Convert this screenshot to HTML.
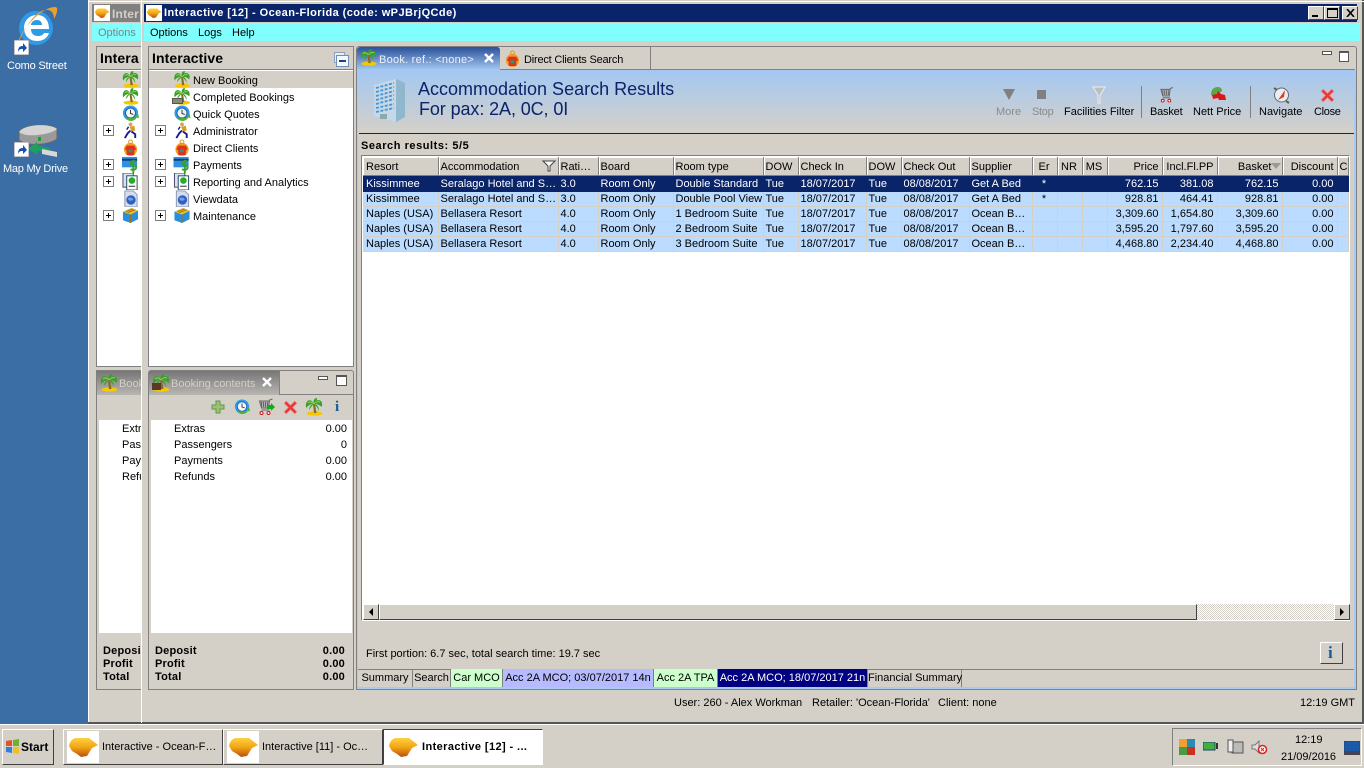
<!DOCTYPE html>
<html><head><meta charset="utf-8"><title>Interactive</title>
<style>
html,body{margin:0;padding:0;width:1364px;height:768px;overflow:hidden;background:#d4d0c8}
body{position:relative;font:11px "Liberation Sans",sans-serif;color:#000;letter-spacing:0}
.a,.t,svg.i{position:absolute}
.t{white-space:nowrap;line-height:14px;margin-top:1px}
.t.z{margin-top:0}
.b{font-weight:bold;letter-spacing:.2px}
.r{text-align:right}
.pb{position:absolute;width:9px;height:9px;border:1px solid #808080;background:#fff}
.pb:before{content:"";position:absolute;left:2px;top:4px;width:5px;height:1px;background:#000}
.pb:after{content:"";position:absolute;left:4px;top:2px;width:1px;height:5px;background:#000}
.btn{position:absolute;background:#d4d0c8;border:1px solid;border-color:#fff #404040 #404040 #fff;box-sizing:border-box}
table{position:absolute;left:363px;top:157px;border-collapse:collapse;table-layout:fixed;width:985px}
td,th{overflow:hidden;white-space:nowrap;padding:0 3px 0 2px;font-weight:normal;text-align:left;box-sizing:border-box}
td:first-child,th:first-child{padding-left:3px}
th{height:18px;line-height:13px;background:#d4d0c8;border-right:1px solid #808080;border-bottom:1px solid #808080;box-shadow:inset 1px 1px 0 #fff;padding-top:4px}
td{height:15px;background:#bbdcff;border-right:1px solid #d4d0c8;border-bottom:1px solid #d4d0c8;line-height:13px;padding-top:1px}
tr.s td{height:16px;line-height:14px;background:#0a246a;color:#fff;border-color:#0a246a}
.n{text-align:right}
.bt{position:absolute;top:669px;height:18px;line-height:19px;text-align:center;border-right:1px solid #808080;box-sizing:border-box;white-space:nowrap}
.tk{position:absolute;top:729px;height:36px;box-sizing:border-box;border:1px solid;border-color:#fff #404040 #404040 #fff;background:#d4d0c8;line-height:35px;white-space:nowrap}
.lg{position:absolute;left:3px;top:1px;width:32px;height:32px;background:#fff}
</style></head><body>
<svg width="0" height="0" style="position:absolute">
<defs>
<linearGradient id="lgo" x1="0" y1="0" x2="0" y2="1"><stop offset="0" stop-color="#ffd040"/><stop offset=".5" stop-color="#f2a414"/><stop offset="1" stop-color="#b84c10"/></linearGradient>
<symbol id="palm" viewBox="0 0 18 18"><ellipse cx="9.500" cy="15.500" rx="8" ry="2.200" fill="#f5c800"/><path d="M8 6l1 9h2.500L10 6z" fill="#8a6a20"/><path d="M9 6C7 1 2 1 1 6c-.5 2 0 3 .5 4C3 7 6 6 9 6zM9 6c2-5 7-5 8-1 .3 2 0 3-.5 4C15 7 12 6 9 6zM9 6C7 6 4 8 4 12c2-3 3-4 5-6zM9 6c3 0 5 3 5 7-1-3-3-5-5-7zM9 6C8 3 9 0 12 0c0 3-1 4-3 6z" fill="#3aa028"/><path d="M3 5c2-2 4-1 6 1M15 4c-2-1-4 0-6 2" stroke="#8fd060" fill="none"/></symbol>
<symbol id="clock" viewBox="0 0 18 18"><circle cx="9" cy="8.500" r="8" fill="#2f9ae8"/><circle cx="9" cy="8.500" r="5.300" fill="#f4f4f4" stroke="#1a60b0"/><path d="M9 5v4l3 1" stroke="#333" fill="none"/><path d="M4 14c3 4 9 4 12-1l-2-.5 3-3.500 1 5-1-.5" fill="#4cb034"/></symbol>
<symbol id="run" viewBox="0 0 18 18"><circle cx="9" cy="2.500" r="2" fill="#d8a060"/><path d="M8 5l5-1 1 5-4 1z" fill="#d8a020"/><path d="M9 9L6 12 3 17M10 10l4 3 0 4" stroke="#1a1a90" stroke-width="2" fill="none"/><path d="M7 5L5 8" stroke="#1a1a90" stroke-width="1.500"/></symbol>
<symbol id="cli" viewBox="0 0 18 18"><circle cx="9" cy="11" r="7" fill="#f0a020"/><circle cx="9" cy="3" r="2" fill="none" stroke="#e09020"/><path d="M5 7h8l2 4-2 1v5H5v-5l-2-1z" fill="#e03020"/><rect x="7" y="11" width="4" height="3" fill="#20a070"/></symbol>
<symbol id="pay" viewBox="0 0 18 18"><rect x="0" y="1" width="16" height="11" fill="#2f8fe0"/><rect x="0" y="3" width="16" height="2" fill="#0a3a80"/><path d="M15 6c-2-1-6-1-6 2 0 3 6 1 6 4 0 3-4 3-6 2M12 4v14" stroke="#38a030" stroke-width="2" fill="none"/></symbol>
<symbol id="rep" viewBox="0 0 18 18"><rect x="1" y="0" width="11" height="15" fill="#d8e4ee" stroke="#446"/><rect x="5" y="3" width="11" height="15" fill="#fff" stroke="#246"/><circle cx="10.500" cy="8" r="3.500" fill="#20b020"/><path d="M7 14h7" stroke="#222"/></symbol>
<symbol id="vd" viewBox="0 0 18 18"><path d="M3 1h9l4 4v13H3z" fill="#d4dcee" stroke="#8a96b0"/><circle cx="9.500" cy="10.500" r="5" fill="#3060c0"/><path d="M6 9c2-2 5-1 6 1-2 2-5 2-6-1z" fill="#70a0e0"/></symbol>
<symbol id="mnt" viewBox="0 0 18 18"><path d="M1 5l9-4 7 3v9l-8 4-8-3z" fill="#2a8fd8"/><path d="M1 5l9-4 7 3-8 4z" fill="#f0c030"/><path d="M4 5l8-3M6 6l8-3M9 8v9" stroke="#a07010"/></symbol>
<symbol id="x" viewBox="0 0 14 14"><path d="M1 3L3 1l4 4 4-4 2 2-4 4 4 4-2 2-4-4-4 4-2-2 4-4z" fill="#e83838" stroke="#f09090" stroke-width=".6"/></symbol>
<symbol id="cart" viewBox="0 0 16 18"><path d="M15 1l-3 1-1 8H4L2 3h10" fill="#b0b0b0" stroke="#666"/><path d="M4 4v5M6 4v5M8 4v5M10 4v5" stroke="#666"/><path d="M4 12h8" stroke="#666"/><circle cx="4" cy="15" r="1.500" fill="#fff" stroke="#d01010"/><circle cx="11" cy="15" r="1.500" fill="#fff" stroke="#d01010"/></symbol>
<symbol id="logo" viewBox="0 0 32 32"><path d="M2 15Q3 9 8 7L22 7 31 14 25 17 20 25 14 26 10 23 5 20Z" fill="url(#lgo)"/></symbol>
<symbol id="ie" viewBox="0 0 44 44"><circle cx="21" cy="22" r="17" fill="#2f9ae8"/><path d="M9 22C9 14 15 9 22 9c7 0 12 5 12 14H16c0 5 3 7 7 7 3 0 5-1 6-3h5c-2 6-7 8-12 8-8 0-13-6-13-13zM16 19h11c0-3-2-5-5-5-3 0-6 2-6 5z" fill="#fff"/><path d="M3 38C4 26 26 1 40 1c4 0 2 7-1 12 0-6-3-10-9-9C18 6 8 26 3 38z" fill="#e8a030"/></symbol>
<symbol id="sc" viewBox="0 0 15 15"><rect width="15" height="15" fill="#fff" stroke="#889" /><path d="M4 12c0-5 2-6 5-6V3l4 5-4 4V9c-2 0-4 0-5 3z" fill="#1a50a8"/></symbol>
</defs></svg>

<!-- Desktop -->
<div class="a" style="left:0;top:0;width:88px;height:725px;background:#3a6ea5"></div>
<svg class="i" style="left:15px;top:6px" width="44" height="44"><use href="#ie"/></svg>
<svg class="i" style="left:14px;top:40px" width="15" height="15"><use href="#sc"/></svg>
<div class="t" style="left:7px;top:58px;color:#fff;letter-spacing:-.2px">Como Street</div>
<svg class="i" style="left:18px;top:122px" width="42" height="38" viewBox="0 0 42 38"><path d="M1 10C6 2 32 1 39 7v10C32 23 8 25 1 18z" fill="#9a9a9a" stroke="#666"/><path d="M1 10C6 2 32 1 39 7 32 13 8 16 1 10z" fill="#d4d4d4"/><rect x="20" y="15" width="3" height="4" fill="#20a020"/><path d="M10 27l9-7 1 4 12 2-1 5-12-2 1 4z" fill="#20a060"/><path d="M24 27l15 3v5l-15-3z" fill="#d8d8d8"/></svg>
<svg class="i" style="left:14px;top:142px" width="15" height="15"><use href="#sc"/></svg>
<div class="t" style="left:3px;top:161px;color:#fff;letter-spacing:-.25px">Map My Drive</div>

<!-- Window frame -->
<div class="a" style="left:88px;top:0;width:1276px;height:724px;background:#d4d0c8;border-left:1px solid #fff;box-sizing:border-box"></div>
<div class="a" style="left:88px;top:722px;width:1276px;height:2px;background:#555"></div>
<div class="a" style="left:1362px;top:0;width:2px;height:724px;background:#555"></div>
<div class="a" style="left:88px;top:1px;width:1276px;height:1px;background:#fff"></div>
<div class="a" style="left:141px;top:0;width:1px;height:723px;background:#fff"></div>

<!-- Back window -->
<div class="a" style="left:92px;top:4px;width:48px;height:18px;background:#808080"></div>
<div class="a" style="left:94px;top:5px;width:16px;height:16px;background:#fff"><svg width="16" height="16"><use href="#logo"/></svg></div>
<div class="t b" style="left:112px;top:6px;width:28px;overflow:hidden;color:#d4d0c8;font-size:12px">Inter</div>
<div class="a" style="left:92px;top:23px;width:49px;height:18px;background:#80ffff"></div>
<div class="t" style="left:98px;top:25px;color:#808080">Options</div>
<div class="a" style="left:96px;top:46px;width:45px;height:321px;background:#fff;border:1px solid #808080;border-right:0;box-sizing:border-box"></div>
<div class="a" style="left:97px;top:47px;width:44px;height:22px;background:#d4d0c8;border-bottom:1px solid #808080"></div>
<div class="t b z" style="left:100px;top:51px;font-size:14px;width:40px;overflow:hidden;letter-spacing:.1px">Intera</div>
<div class="a" style="left:97px;top:71px;width:44px;height:17px;background:#d4d0c8"></div>
<svg class="i" style="left:122px;top:71px" width="17" height="17"><use href="#palm"/></svg>
<svg class="i" style="left:122px;top:88px" width="17" height="17"><use href="#palm"/></svg>
<svg class="i" style="left:122px;top:105px" width="17" height="17"><use href="#clock"/></svg>
<svg class="i" style="left:122px;top:122px" width="17" height="17"><use href="#run"/></svg>
<svg class="i" style="left:122px;top:139px" width="17" height="17"><use href="#cli"/></svg>
<svg class="i" style="left:122px;top:156px" width="17" height="17"><use href="#pay"/></svg>
<svg class="i" style="left:122px;top:173px" width="17" height="17"><use href="#rep"/></svg>
<svg class="i" style="left:122px;top:190px" width="17" height="17"><use href="#vd"/></svg>
<svg class="i" style="left:122px;top:207px" width="17" height="17"><use href="#mnt"/></svg>
<div class="pb" style="left:103px;top:125px"></div>
<div class="pb" style="left:103px;top:159px"></div>
<div class="pb" style="left:103px;top:176px"></div>
<div class="pb" style="left:103px;top:210px"></div>

<div class="a" style="left:96px;top:370px;width:45px;height:320px;background:#d4d0c8;border:1px solid #808080;border-right:0;box-sizing:border-box"></div>
<div class="a" style="left:97px;top:371px;width:44px;height:24px;background:linear-gradient(#777,#b8b6b2)"></div>
<svg class="i" style="left:100px;top:374px" width="18" height="18"><use href="#palm"/></svg>
<div class="t" style="left:119px;top:376px;color:#d4d0c8;width:22px;overflow:hidden">Booking</div>
<div class="a" style="left:99px;top:420px;width:42px;height:213px;background:#fff"></div>
<div class="t" style="left:122px;top:421px;width:19px;overflow:hidden">Extras</div>
<div class="t" style="left:122px;top:437px;width:19px;overflow:hidden">Passengers</div>
<div class="t" style="left:122px;top:453px;width:19px;overflow:hidden">Payments</div>
<div class="t" style="left:122px;top:469px;width:19px;overflow:hidden">Refunds</div>
<div class="t b" style="left:103px;top:643px;width:37px;overflow:hidden">Deposit</div>
<div class="t b" style="left:103px;top:656px">Profit</div>
<div class="t b" style="left:103px;top:669px">Total</div>

<!-- Front window title -->
<div class="a" style="left:144px;top:4px;width:1213px;height:18px;background:#0a246a"></div>
<div class="a" style="left:146px;top:5px;width:16px;height:16px;background:#fff"><svg width="16" height="16"><use href="#logo"/></svg></div>
<div class="t b" style="left:164px;top:5px;color:#fff;letter-spacing:.43px">Interactive [12] - Ocean-Florida (code: wPJBrjQCde)</div>
<div class="btn" style="left:1308px;top:6px;width:16px;height:14px"><div class="a" style="left:3px;top:8px;width:6px;height:2px;background:#000"></div></div>
<div class="btn" style="left:1324px;top:6px;width:16px;height:14px"><div class="a" style="left:2px;top:1px;width:11px;height:10px;border:1px solid #000;border-top-width:2px;box-sizing:border-box"></div></div>
<div class="btn" style="left:1342px;top:6px;width:16px;height:14px"><svg class="i" style="left:3px;top:2px" width="9" height="8"><path d="M1 0l7 8M8 0l-7 8" stroke="#000" stroke-width="1.600"/></svg></div>
<div class="a" style="left:144px;top:23px;width:1216px;height:18px;background:#80ffff"></div>
<div class="t" style="left:150px;top:25px">Options</div>
<div class="t" style="left:198px;top:25px">Logs</div>
<div class="t" style="left:232px;top:25px">Help</div>

<!-- Left tree panel -->
<div class="a" style="left:148px;top:46px;width:206px;height:321px;background:#fff;border:1px solid #808080;box-sizing:border-box"></div>
<div class="a" style="left:149px;top:47px;width:204px;height:22px;background:#d4d0c8;border-bottom:1px solid #808080"></div>
<div class="t b z" style="left:152px;top:51px;font-size:14px;letter-spacing:.1px">Interactive</div>
<div class="a" style="left:334px;top:52px;width:9px;height:9px;border:1px solid #8ca0c0;background:#e8eef8"></div>
<div class="a" style="left:336px;top:55px;width:11px;height:10px;border:1px solid #7090b8;background:#f4f8ff"><div class="a" style="left:2px;top:4px;width:7px;height:1.500px;background:#204080"></div></div>
<div class="a" style="left:149px;top:71px;width:204px;height:17px;background:#d4d0c8"></div>
<svg class="i" style="left:173px;top:71px" width="18" height="17"><use href="#palm"/></svg>
<svg class="i" style="left:173px;top:88px" width="18" height="17"><use href="#palm"/></svg>
<div class="a" style="left:172px;top:98px;width:11px;height:6px;background:#8a8a70;border:1px solid #555;box-sizing:border-box"></div>
<svg class="i" style="left:173px;top:105px" width="18" height="17"><use href="#clock"/></svg>
<svg class="i" style="left:173px;top:122px" width="18" height="17"><use href="#run"/></svg>
<svg class="i" style="left:173px;top:139px" width="18" height="17"><use href="#cli"/></svg>
<svg class="i" style="left:173px;top:156px" width="18" height="17"><use href="#pay"/></svg>
<svg class="i" style="left:173px;top:173px" width="18" height="17"><use href="#rep"/></svg>
<svg class="i" style="left:173px;top:190px" width="18" height="17"><use href="#vd"/></svg>
<svg class="i" style="left:173px;top:207px" width="18" height="17"><use href="#mnt"/></svg>
<div class="t" style="left:193px;top:73px">New Booking</div>
<div class="t" style="left:193px;top:90px">Completed Bookings</div>
<div class="t" style="left:193px;top:107px">Quick Quotes</div>
<div class="t" style="left:193px;top:124px">Administrator</div>
<div class="t" style="left:193px;top:141px">Direct Clients</div>
<div class="t" style="left:193px;top:158px">Payments</div>
<div class="t" style="left:193px;top:175px">Reporting and Analytics</div>
<div class="t" style="left:193px;top:192px">Viewdata</div>
<div class="t" style="left:193px;top:209px">Maintenance</div>
<div class="pb" style="left:155px;top:125px"></div>
<div class="pb" style="left:155px;top:159px"></div>
<div class="pb" style="left:155px;top:176px"></div>
<div class="pb" style="left:155px;top:210px"></div>

<!-- Booking contents -->
<div class="a" style="left:148px;top:370px;width:206px;height:320px;background:#d4d0c8;border:1px solid #808080;box-sizing:border-box;border-radius:3px 3px 0 0"></div>
<div class="a" style="left:149px;top:371px;width:130px;height:24px;background:linear-gradient(#777,#b8b6b2)"></div>
<div class="a" style="left:279px;top:371px;width:1px;height:24px;background:#808080"></div>
<div class="a" style="left:280px;top:394px;width:73px;height:1px;background:#808080"></div>
<svg class="i" style="left:152px;top:374px" width="18" height="18"><use href="#palm"/></svg>
<div class="a" style="left:152px;top:383px;width:9px;height:7px;background:#5a3a20"></div>
<div class="t" style="left:171px;top:376px;color:#d4d0c8">Booking contents</div>
<svg class="i" style="left:262px;top:377px" width="10" height="10"><path d="M1 1l8 8M9 1l-8 8" stroke="#fff" stroke-width="2.400"/></svg>
<div class="a" style="left:318px;top:376px;width:8px;height:2px;border:1px solid #555;background:#fff"></div>
<div class="a" style="left:336px;top:375px;width:9px;height:8px;border:1px solid #555;border-top-width:2px;background:#fff"></div>
<svg class="i" style="left:211px;top:400px" width="14" height="14"><path d="M5 1h4v4h4v4H9v4H5V9H1V5h4z" fill="#a0c070" stroke="#5a9a50"/></svg>
<svg class="i" style="left:234px;top:399px" width="16" height="16"><use href="#clock"/></svg>
<svg class="i" style="left:257px;top:398px" width="17" height="18"><use href="#cart"/></svg>
<svg class="i" style="left:267px;top:403px" width="8" height="8"><path d="M0 2h4V0l4 4-4 4V6H0z" fill="#10b010"/></svg>
<svg class="i" style="left:283px;top:400px" width="15" height="15"><use href="#x"/></svg>
<svg class="i" style="left:305px;top:398px" width="18" height="18"><use href="#palm"/></svg>
<div class="t b" style="left:335px;top:399px;color:#1a5a9a;font-size:15px;font-family:'Liberation Serif',serif">i</div>
<div class="a" style="left:151px;top:420px;width:201px;height:213px;background:#fff"></div>
<div class="t" style="left:174px;top:421px">Extras</div><div class="t r" style="right:1017px;top:421px">0.00</div>
<div class="t" style="left:174px;top:437px">Passengers</div><div class="t r" style="right:1017px;top:437px">0</div>
<div class="t" style="left:174px;top:453px">Payments</div><div class="t r" style="right:1017px;top:453px">0.00</div>
<div class="t" style="left:174px;top:469px">Refunds</div><div class="t r" style="right:1017px;top:469px">0.00</div>
<div class="t b" style="left:155px;top:643px">Deposit</div><div class="t b r" style="right:1019px;top:643px">0.00</div>
<div class="t b" style="left:155px;top:656px">Profit</div><div class="t b r" style="right:1019px;top:656px">0.00</div>
<div class="t b" style="left:155px;top:669px">Total</div><div class="t b r" style="right:1019px;top:669px">0.00</div>

<!-- Main panel -->
<div class="a" style="left:356px;top:46px;width:1001px;height:644px;background:#d4d0c8;border:1px solid #808080;box-sizing:border-box;border-radius:3px 3px 0 0"></div>
<div class="a" style="left:357px;top:69px;width:998px;height:1px;background:#808080"></div>
<div class="a" style="left:1354px;top:70px;width:2px;height:619px;background:#a6caf0"></div>
<div class="a" style="left:357px;top:687px;width:999px;height:2px;background:#a6caf0"></div>
<div class="a" style="left:357px;top:70px;width:1px;height:618px;background:#a6caf0"></div>
<div class="a" style="left:358px;top:70px;width:996px;height:63px;background:linear-gradient(#a4c8f2,#d4d0c8)"></div>
<div class="a" style="left:359px;top:133px;width:995px;height:1px;background:#0a246a"></div>
<div class="a" style="left:357px;top:47px;width:143px;height:23px;background:linear-gradient(#2a5098,#a4c8f2);border-radius:3px 3px 0 0"></div>
<svg class="i" style="left:360px;top:49px" width="17" height="17"><use href="#palm"/></svg>
<div class="t" style="left:379px;top:52px;color:#eef2fa;letter-spacing:.25px">Book. ref.: &lt;none&gt;</div>
<svg class="i" style="left:484px;top:53px" width="10" height="10"><path d="M1 1l8 8M9 1l-8 8" stroke="#fff" stroke-width="2.400"/></svg>
<div class="a" style="left:650px;top:47px;width:1px;height:22px;background:#808080"></div>
<svg class="i" style="left:504px;top:50px" width="17" height="17"><use href="#cli"/></svg>
<div class="t" style="left:524px;top:52px;letter-spacing:-.2px">Direct Clients Search</div>
<div class="a" style="left:1322px;top:51px;width:8px;height:2px;border:1px solid #555;background:#fff"></div>
<div class="a" style="left:1339px;top:51px;width:8px;height:8px;border:1px solid #555;border-top-width:2px;background:#fff"></div>

<svg class="i" style="left:371px;top:76px" width="36" height="48" viewBox="0 0 36 48"><path d="M3 9L25 3v43L3 40z" fill="#c4d8e8"/><path d="M25 3l9 4v34l-9 5z" fill="#8fb8cc"/><path d="M5 12l18-5M5 16l18-5M5 20l18-5M5 24l18-5M5 28l18-5M5 32l18-4M5 36l18-4" stroke="#4a94d0" stroke-width="1.800" stroke-dasharray="3 1.500"/><rect x="9" y="38" width="7" height="5" fill="#8aa"/></svg>
<div class="t z" style="left:418px;top:79px;font-size:18px;line-height:20px;color:#0a246a">Accommodation Search Results</div>
<div class="t z" style="left:419px;top:99px;font-size:18px;line-height:20px;color:#0a246a;letter-spacing:-.1px">For pax: 2A, 0C, 0I</div>

<svg class="i" style="left:1003px;top:89px" width="12" height="11"><path d="M0 0h12L6 11z" fill="#808080"/></svg>
<div class="a" style="left:1037px;top:90px;width:9px;height:9px;background:#808080"></div>
<svg class="i" style="left:1092px;top:86px" width="14" height="18"><path d="M1 1h12L8 9v8H6V9z" fill="#bdbdbd" stroke="#eee"/></svg>
<div class="t" style="left:996px;top:104px;color:#8a8a8a">More</div>
<div class="t" style="left:1032px;top:104px;color:#8a8a8a;letter-spacing:-.3px">Stop</div>
<div class="t" style="left:1064px;top:104px">Facilities Filter</div>
<div class="a" style="left:1141px;top:86px;width:1px;height:32px;background:#808080"></div>
<svg class="i" style="left:1159px;top:86px" width="15" height="18"><use href="#cart"/></svg>
<div class="t" style="left:1150px;top:104px;letter-spacing:-.2px">Basket</div>
<svg class="i" style="left:1209px;top:86px" width="18" height="17" viewBox="0 0 18 17"><path d="M2 9C2 3 5 1 9 1c3 0 4 2 4 4L6 11z" fill="#58a848"/><path d="M3 9l5-1 1-3 3 3 4 1 1 5H10l-1-2-5 1z" fill="#d81818"/></svg>
<div class="t" style="left:1193px;top:104px">Nett Price</div>
<div class="a" style="left:1250px;top:86px;width:1px;height:32px;background:#808080"></div>
<svg class="i" style="left:1273px;top:86px" width="17" height="18" viewBox="0 0 17 18"><circle cx="8.500" cy="9" r="7" fill="#e8eef4" stroke="#667"/><path d="M5 14L12 4l-1 7z" fill="#d84020"/><path d="M1 2l3 2M13 15l3 2" stroke="#664" stroke-width="2"/></svg>
<div class="t" style="left:1259px;top:104px">Navigate</div>
<svg class="i" style="left:1320px;top:88px" width="15" height="15"><use href="#x"/></svg>
<div class="t" style="left:1314px;top:104px;letter-spacing:-.3px">Close</div>

<div class="t b z" style="left:361px;top:139px;letter-spacing:.55px">Search results: 5/5</div>

<div class="a" style="left:361px;top:155px;width:989px;height:466px;background:#fff;border:1px solid;border-color:#808080 #fff #fff #808080;box-sizing:border-box"></div>
<table>
<colgroup><col style="width:75px"><col style="width:120px"><col style="width:40px"><col style="width:75px"><col style="width:90px"><col style="width:35px"><col style="width:68px"><col style="width:35px"><col style="width:68px"><col style="width:63px"><col style="width:25px"><col style="width:25px"><col style="width:25px"><col style="width:55px"><col style="width:55px"><col style="width:65px"><col style="width:55px"><col style="width:11px"></colgroup>
<tr><th>Resort</th><th>Accommodation</th><th>Rati…</th><th>Board</th><th>Room type</th><th>DOW</th><th>Check In</th><th>DOW</th><th>Check Out</th><th>Supplier</th><th style="text-align:center">Er</th><th style="text-align:center">NR</th><th style="text-align:center">MS</th><th class="n">Price</th><th class="n">Incl.Fl.PP</th><th class="n" style="padding-right:10px">Basket</th><th class="n">Discount</th><th>C</th></tr>
<tr class="s"><td>Kissimmee</td><td>Seralago Hotel and S…</td><td>3.0</td><td>Room Only</td><td>Double Standard</td><td>Tue</td><td>18/07/2017</td><td>Tue</td><td>08/08/2017</td><td>Get A Bed</td><td style="text-align:center">*</td><td></td><td></td><td class="n">762.15</td><td class="n">381.08</td><td class="n">762.15</td><td class="n">0.00</td><td></td></tr>
<tr><td>Kissimmee</td><td>Seralago Hotel and S…</td><td>3.0</td><td>Room Only</td><td>Double Pool View</td><td>Tue</td><td>18/07/2017</td><td>Tue</td><td>08/08/2017</td><td>Get A Bed</td><td style="text-align:center">*</td><td></td><td></td><td class="n">928.81</td><td class="n">464.41</td><td class="n">928.81</td><td class="n">0.00</td><td></td></tr>
<tr><td>Naples (USA)</td><td>Bellasera Resort</td><td>4.0</td><td>Room Only</td><td>1 Bedroom Suite</td><td>Tue</td><td>18/07/2017</td><td>Tue</td><td>08/08/2017</td><td>Ocean B…</td><td></td><td></td><td></td><td class="n">3,309.60</td><td class="n">1,654.80</td><td class="n">3,309.60</td><td class="n">0.00</td><td></td></tr>
<tr><td>Naples (USA)</td><td>Bellasera Resort</td><td>4.0</td><td>Room Only</td><td>2 Bedroom Suite</td><td>Tue</td><td>18/07/2017</td><td>Tue</td><td>08/08/2017</td><td>Ocean B…</td><td></td><td></td><td></td><td class="n">3,595.20</td><td class="n">1,797.60</td><td class="n">3,595.20</td><td class="n">0.00</td><td></td></tr>
<tr><td>Naples (USA)</td><td>Bellasera Resort</td><td>4.0</td><td>Room Only</td><td>3 Bedroom Suite</td><td>Tue</td><td>18/07/2017</td><td>Tue</td><td>08/08/2017</td><td>Ocean B…</td><td></td><td></td><td></td><td class="n">4,468.80</td><td class="n">2,234.40</td><td class="n">4,468.80</td><td class="n">0.00</td><td></td></tr>
</table>
<svg class="i" style="left:542px;top:160px" width="14" height="12"><path d="M1 1h12L8 6v5l-2 0V6z" fill="#fff" stroke="#444"/></svg>
<svg class="i" style="left:1271px;top:163px" width="10" height="6"><path d="M0 0h10L5 6z" fill="#999"/></svg>

<!-- Scrollbar -->
<div class="a" style="left:363px;top:604px;width:986px;height:16px;background:repeating-conic-gradient(#d4d0c8 0 25%,#fff 0 50%) 0 0/2px 2px"></div>
<div class="btn" style="left:363px;top:604px;width:16px;height:16px"><svg class="i" style="left:5px;top:3px" width="5" height="8"><path d="M4 0v8L0 4z"/></svg></div>
<div class="btn" style="left:379px;top:604px;width:818px;height:16px"></div>
<div class="btn" style="left:1334px;top:604px;width:16px;height:16px"><svg class="i" style="left:5px;top:3px" width="5" height="8"><path d="M0 0v8l4-4z"/></svg></div>

<div class="t" style="left:366px;top:646px">First portion: 6.7 sec, total search time: 19.7 sec</div>
<div class="btn" style="left:1320px;top:642px;width:23px;height:22px"></div>
<div class="t b" style="left:1328px;top:645px;color:#1a5a9a;font-size:17px;font-family:'Liberation Serif',serif">i</div>
<div class="a" style="left:358px;top:669px;width:996px;height:1px;background:#808080"></div>
<div class="bt" style="left:358px;width:55px">Summary</div>
<div class="bt" style="left:413px;width:38px">Search</div>
<div class="bt" style="left:451px;width:52px;background:#ccffcc">Car MCO</div>
<div class="bt" style="left:503px;width:151px;background:#b6baff">Acc 2A MCO; 03/07/2017 14n</div>
<div class="bt" style="left:654px;width:64px;background:#ccffcc">Acc 2A TPA</div>
<div class="bt" style="left:718px;width:150px;background:#000080;color:#fff">Acc 2A MCO; 18/07/2017 21n</div>
<div class="bt" style="left:868px;width:94px">Financial Summary</div>

<div class="t" style="left:674px;top:695px">User: 260 - Alex Workman</div>
<div class="t" style="left:812px;top:695px">Retailer: 'Ocean-Florida'</div>
<div class="t" style="left:938px;top:695px">Client: none</div>
<div class="t" style="left:1300px;top:695px">12:19 GMT</div>

<!-- Taskbar -->
<div class="a" style="left:0;top:724px;width:1364px;height:44px;background:#d4d0c8;border-top:1px solid #fff;box-sizing:border-box"></div>
<div class="tk b" style="left:2px;width:52px"><svg class="i" style="left:2px;top:9px" width="15" height="15" viewBox="0 0 15 15"><path d="M1 2l6-1v6H1z" fill="#e8502a"/><path d="M8 1l6-1v7H8z" fill="#70b030"/><path d="M1 8h6v6l-6-1z" fill="#3080d8"/><path d="M8 8h6v7l-6-1z" fill="#f0c020"/></svg><span style="position:absolute;left:18px;font-size:12px;letter-spacing:0">Start</span></div>
<div class="tk" style="left:63px;width:160px"><div class="lg"><svg width="32" height="32"><use href="#logo"/></svg></div><span style="position:absolute;left:38px">Interactive - Ocean-F…</span></div>
<div class="tk" style="left:223px;width:160px"><div class="lg"><svg width="32" height="32"><use href="#logo"/></svg></div><span style="position:absolute;left:38px">Interactive [11] - Oc…</span></div>
<div class="tk b" style="left:383px;width:160px;background:#fff;border-color:#404040 #fff #fff #404040"><div class="lg"><svg width="32" height="32"><use href="#logo"/></svg></div><span style="position:absolute;left:38px;letter-spacing:.4px">Interactive [12] - ...</span></div>

<div class="a" style="left:1172px;top:728px;width:190px;height:38px;border:1px solid;border-color:#808080 #fff #fff #808080;box-sizing:border-box"></div>
<svg class="i" style="left:1179px;top:739px" width="16" height="16"><rect width="8" height="8" fill="#f0a030"/><rect x="8" width="8" height="8" fill="#2a8ab0"/><rect y="8" width="8" height="8" fill="#4a9a40"/><rect x="8" y="8" width="8" height="8" fill="#c83020"/></svg>
<svg class="i" style="left:1203px;top:742px" width="16" height="10"><rect width="12" height="8" fill="#40b040" stroke="#246"/><rect x="13" y="1" width="2" height="6" fill="#333"/></svg>
<svg class="i" style="left:1227px;top:739px" width="17" height="16"><rect x="5" y="3" width="11" height="11" fill="#bbb" stroke="#555"/><rect x="1" y="1" width="5" height="12" fill="#eee" stroke="#555"/></svg>
<svg class="i" style="left:1251px;top:740px" width="17" height="15"><path d="M1 5h3l4-4v12L4 9H1z" fill="#ddd" stroke="#777"/><circle cx="11.500" cy="9.500" r="4" fill="#fff" stroke="#d82020" stroke-width="1.500"/><path d="M10 8l3 3M13 8l-3 3" stroke="#d82020"/></svg>
<div class="t" style="left:1295px;top:732px">12:19</div>
<div class="t" style="left:1281px;top:749px">21/09/2016</div>
<svg class="i" style="left:1344px;top:741px" width="16" height="14"><rect width="16" height="14" fill="#1a5aa8" stroke="#246"/><rect x="0" y="10" width="16" height="4" fill="#445"/></svg>
</body></html>
